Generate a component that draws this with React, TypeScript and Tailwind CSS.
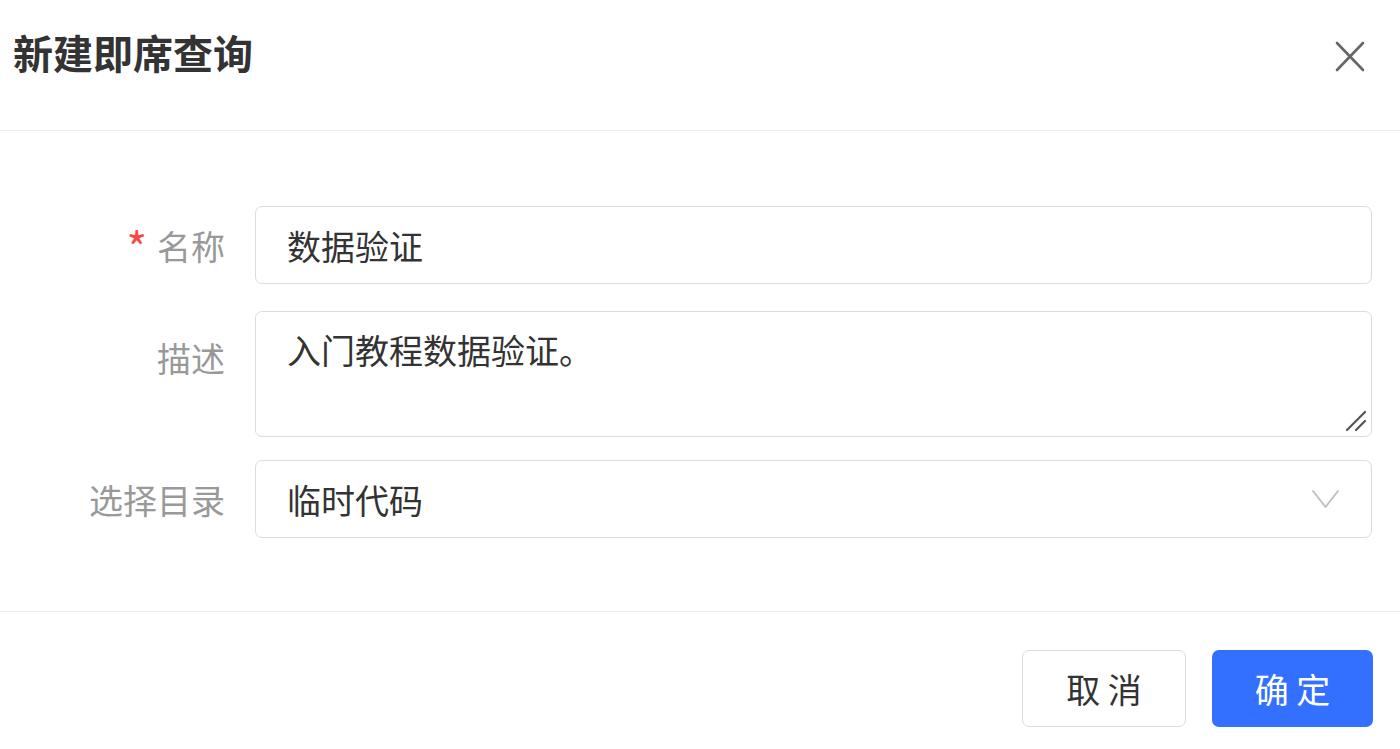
import React from "react";

const font = { fontFamily: '"Noto Sans CJK SC", "Noto Sans", sans-serif' };

export default function App() {
  return (
    <div
      className="w-[1400px] h-[749px] bg-white overflow-hidden flex flex-col"
      style={font}
    >
      {/* Header */}
      <div className="h-[131px] shrink-0 border-b border-[#ebebeb] flex items-start justify-between pl-[13px] pr-[34px]">
        <div className="mt-[27px] text-[40px] leading-[50px] font-semibold text-[#333333]">
          新建即席查询
        </div>
        <button className="mt-[40px] w-[32px] h-[32px] flex items-center justify-center">
          <svg width="30" height="31" viewBox="0 0 30 31" fill="none">
            <path d="M2 2 L28 29 M28 2 L2 29" stroke="#666666" strokeWidth="2.6" strokeLinecap="round" />
          </svg>
        </button>
      </div>

      {/* Body */}
      <div className="flex-1 pt-[75px] pr-[28px] border-b border-[#ebebeb] flex flex-col">
        {/* Name */}
        <div className="flex items-center">
          <div className="w-[225px] shrink-0 flex items-center justify-end text-[34px] text-[#999999]">
            <span className="text-[#f54a45] text-[44px] leading-none mr-[10px] mt-[2px]">*</span>
            <span>名称</span>
          </div>
          <div className="ml-[30px] flex-1 h-[78px] border border-[#dcdcdc] rounded-[7px] flex items-center px-[31px] text-[34px] text-[#333333]">
            数据验证
          </div>
        </div>

        {/* Description */}
        <div className="flex items-start mt-[27px]">
          <div className="w-[225px] shrink-0 flex justify-end pt-[23px] text-[34px] leading-[48px] text-[#999999]">
            描述
          </div>
          <div className="relative ml-[30px] flex-1 h-[126px] border border-[#dcdcdc] rounded-[7px] px-[31px] pt-[14px] text-[34px] leading-[48px] text-[#333333]">
            入门教程数据验证。
            <svg
              className="absolute right-[3px] bottom-[3px]"
              width="24"
              height="24"
              viewBox="0 0 24 24"
              fill="none"
            >
              <path d="M3 21 L21 3 M12 21 L21 12" stroke="#555555" strokeWidth="2.2" strokeLinecap="round" />
            </svg>
          </div>
        </div>

        {/* Directory */}
        <div className="flex items-center mt-[23px]">
          <div className="w-[225px] shrink-0 flex justify-end text-[34px] text-[#999999]">
            选择目录
          </div>
          <div className="ml-[30px] flex-1 h-[78px] border border-[#dcdcdc] rounded-[7px] flex items-center justify-between pl-[31px] pr-[31px] text-[34px] text-[#333333]">
            <span>临时代码</span>
            <svg width="29" height="22" viewBox="0 0 29 22" fill="none">
              <path d="M2 3 L14.5 19 L27 3" stroke="#c0c0c0" strokeWidth="2" strokeLinecap="round" strokeLinejoin="round" />
            </svg>
          </div>
        </div>
      </div>

      {/* Footer */}
      <div className="h-[137px] shrink-0 flex items-start justify-end pt-[38px] pr-[27px] gap-[26px]">
        <button className="w-[164px] h-[77px] border border-[#dcdcdc] rounded-[7px] bg-white text-[34px] text-[#333333] flex items-center justify-center">
          取 消
        </button>
        <button className="w-[161px] h-[77px] rounded-[7px] bg-[#3370ff] text-[34px] text-white flex items-center justify-center">
          确 定
        </button>
      </div>
    </div>
  );
}
